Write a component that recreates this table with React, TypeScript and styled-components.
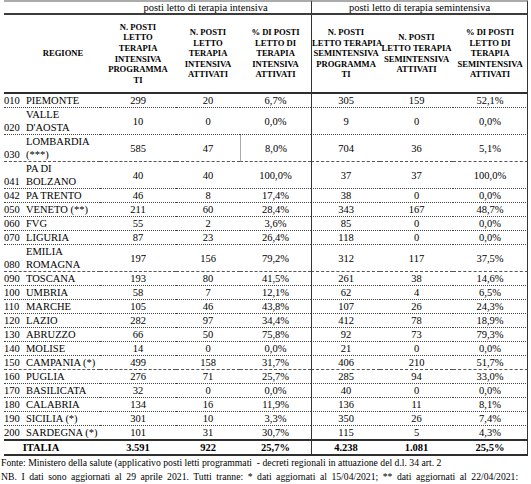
import styled, { createGlobalStyle } from 'styled-components'

type Edge = 'dotted' | 'dashed' | 'thick'

type Row = {
  code: string
  name: string[]
  ti: string[]
  sti: string[]
  edge?: Edge
  mark?: boolean
}

const rows: Row[] = [
  { code: '010', name: ['PIEMONTE'], ti: ['299', '20', '6,7%'], sti: ['305', '159', '52,1%'] },
  { code: '020', name: ['VALLE', "D'AOSTA"], ti: ['10', '0', '0,0%'], sti: ['9', '0', '0,0%'] },
  { code: '030', name: ['LOMBARDIA', '(***)'], ti: ['585', '47', '8,0%'], sti: ['704', '36', '5,1%'], edge: 'dashed', mark: true },
  { code: '041', name: ['PA DI', 'BOLZANO'], ti: ['40', '40', '100,0%'], sti: ['37', '37', '100,0%'] },
  { code: '042', name: ['PA TRENTO'], ti: ['46', '8', '17,4%'], sti: ['38', '0', '0,0%'] },
  { code: '050', name: ['VENETO (**)'], ti: ['211', '60', '28,4%'], sti: ['343', '167', '48,7%'] },
  { code: '060', name: ['FVG'], ti: ['55', '2', '3,6%'], sti: ['85', '0', '0,0%'] },
  { code: '070', name: ['LIGURIA'], ti: ['87', '23', '26,4%'], sti: ['118', '0', '0,0%'] },
  { code: '080', name: ['EMILIA', 'ROMAGNA'], ti: ['197', '156', '79,2%'], sti: ['312', '117', '37,5%'], edge: 'dashed' },
  { code: '090', name: ['TOSCANA'], ti: ['193', '80', '41,5%'], sti: ['261', '38', '14,6%'] },
  { code: '100', name: ['UMBRIA'], ti: ['58', '7', '12,1%'], sti: ['62', '4', '6,5%'] },
  { code: '110', name: ['MARCHE'], ti: ['105', '46', '43,8%'], sti: ['107', '26', '24,3%'] },
  { code: '120', name: ['LAZIO'], ti: ['282', '97', '34,4%'], sti: ['412', '78', '18,9%'] },
  { code: '130', name: ['ABRUZZO'], ti: ['66', '50', '75,8%'], sti: ['92', '73', '79,3%'] },
  { code: '140', name: ['MOLISE'], ti: ['14', '0', '0,0%'], sti: ['21', '0', '0,0%'] },
  { code: '150', name: ['CAMPANIA (*)'], ti: ['499', '158', '31,7%'], sti: ['406', '210', '51,7%'], edge: 'dashed' },
  { code: '160', name: ['PUGLIA'], ti: ['276', '71', '25,7%'], sti: ['285', '94', '33,0%'] },
  { code: '170', name: ['BASILICATA'], ti: ['32', '0', '0,0%'], sti: ['40', '0', '0,0%'] },
  { code: '180', name: ['CALABRIA'], ti: ['134', '16', '11,9%'], sti: ['136', '11', '8,1%'] },
  { code: '190', name: ['SICILIA (*)'], ti: ['301', '10', '3,3%'], sti: ['350', '26', '7,4%'] },
  { code: '200', name: ['SARDEGNA (*)'], ti: ['101', '31', '30,7%'], sti: ['115', '5', '4,3%'], edge: 'thick' },
]

const totals = ['3.591', '922', '25,7%', '4.238', '1.081', '25,5%']

const widths = [96, 76, 64, 71, 69, 73, 75]

const heads = [
  ['N. POSTI', 'LETTO', 'TERAPIA', 'INTENSIVA', 'PROGRAMMA', 'TI'],
  ['N. POSTI', 'LETTO', 'TERAPIA', 'INTENSIVA', 'ATTIVATI'],
  ['% DI POSTI', 'LETTO DI', 'TERAPIA', 'INTENSIVA', 'ATTIVATI'],
  ['N. POSTI', 'LETTO TERAPIA', 'SEMINTENSIVA', 'PROGRAMMA', 'TI'],
  ['N. POSTI', 'LETTO TERAPIA', 'SEMINTENSIVA', 'ATTIVATI'],
  ['% DI POSTI', 'LETTO DI', 'TERAPIA', 'SEMINTENSIVA', 'ATTIVATI'],
]

const lines = (parts: string[]) =>
  parts.map((p, i) => (
    <span key={i}>
      {i > 0 && <br />}
      {p}
    </span>
  ))

export default function App() {
  return (
    <Page>
      <GlobalStyle />
      <Table>
        <colgroup>
          {widths.map((w, i) => (
            <Col key={i} $w={w} />
          ))}
        </colgroup>
        <thead>
          <tr>
            <GroupCell />
            <GroupCell colSpan={3}>posti letto di terapia intensiva</GroupCell>
            <GroupCell colSpan={3} $split $end>
              posti letto di terapia semintensiva
            </GroupCell>
          </tr>
          <tr>
            <HeadCell $region>REGIONE</HeadCell>
            {heads.map((h, i) => (
              <HeadCell key={i} $split={i === 3} $end={i === 5}>
                {lines(h)}
              </HeadCell>
            ))}
          </tr>
        </thead>
        <tbody>
          {rows.map(r => {
            const edge = r.edge ?? 'dotted'
            return (
              <tr key={r.code}>
                <Cell $edge={edge} $left>
                  <Region>
                    <Code>{r.code}</Code>
                    <Name>{lines(r.name)}</Name>
                  </Region>
                </Cell>
                {r.ti.map((v, i) => (
                  <Cell key={'t' + i} $edge={edge} $mark={r.mark && i === 2}>
                    {v}
                  </Cell>
                ))}
                {r.sti.map((v, i) => (
                  <Cell key={'s' + i} $edge={edge} $split={i === 0} $end={i === 2}>
                    {v}
                  </Cell>
                ))}
              </tr>
            )
          })}
          <tr>
            <Cell $edge="thick" $bold $total>
              ITALIA
            </Cell>
            {totals.map((v, i) => (
              <Cell key={i} $edge="thick" $bold $split={i === 3} $end={i === 5}>
                {v}
              </Cell>
            ))}
          </tr>
        </tbody>
      </Table>
      <Footer>
        <Note>
          Fonte: Ministero della salute (applicativo posti letti programmati&nbsp; - decreti regionali in attuazione del d.l. 34 art. 2
        </Note>
        <Note $spread>
          NB. I dati sono aggiornati al 29 aprile 2021. Tutti tranne: * dati aggiornati al 15/04/2021; ** dati aggiornati al 22/04/2021:
        </Note>
      </Footer>
    </Page>
  )
}

const GlobalStyle = createGlobalStyle`
  body {
    margin: 0;
    background: #fff;
  }
`

const Page = styled.div`
  width: 531px;
  height: 484px;
  overflow: hidden;
  font-family: "Liberation Serif", "Times New Roman", serif;
  color: #000;
`

const Table = styled.table`
  margin-left: 4px;
  width: 524px;
  table-layout: fixed;
  border-collapse: separate;
  border-spacing: 0;
`

const Col = styled.col<{ $w: number }>`
  width: ${p => p.$w}px;
`

const GroupCell = styled.th<{ $split?: boolean; $end?: boolean }>`
  padding: 0;
  height: 11px;
  font-size: 10.5px;
  font-weight: normal;
  line-height: 11px;
  text-align: center;
  white-space: nowrap;
  border-top: 2px solid #ababab;
  border-bottom: 2px solid #3c3c3c;
  border-left: ${p => (p.$split ? '1px solid #333' : 'none')};
  border-right: ${p => (p.$end ? '1px solid #333' : 'none')};
`

const HeadCell = styled.th<{ $split?: boolean; $end?: boolean; $region?: boolean }>`
  padding: 0 0 0 ${p => (p.$region ? '22px' : '0')};
  height: 77px;
  font-size: 8.6px;
  font-weight: bold;
  line-height: 10.6px;
  text-align: center;
  vertical-align: middle;
  white-space: nowrap;
  border-bottom: 2px solid #2e2e2e;
  border-left: ${p => (p.$split ? '1px solid #333' : 'none')};
  border-right: ${p => (p.$end ? '1px solid #333' : 'none')};
`

const edgeStyle = (e: Edge) =>
  e === 'thick' ? '2px solid #2e2e2e' : e === 'dashed' ? '1px dashed #555' : '1px dotted #444'

const Cell = styled.td<{
  $edge: Edge
  $split?: boolean
  $end?: boolean
  $left?: boolean
  $bold?: boolean
  $mark?: boolean
  $total?: boolean
}>`
  padding: 0 ${p => (p.$total ? '22px' : '0')} 0 0;
  font-size: 10.5px;
  line-height: 13px;
  font-weight: ${p => (p.$bold ? 'bold' : 'normal')};
  text-align: ${p => (p.$left ? 'left' : 'center')};
  vertical-align: middle;
  white-space: nowrap;
  border-bottom: ${p => edgeStyle(p.$edge)};
  border-left: ${p => (p.$split ? '1px solid #333' : p.$mark ? '1px solid #aaa' : 'none')};
  border-right: ${p => (p.$end ? '1px solid #333' : 'none')};
`

const Region = styled.div`
  display: flex;
  align-items: flex-end;
`

const Code = styled.span`
  flex: none;
  width: 22px;
`

const Name = styled.span`
  display: block;
`

const Footer = styled.div`
  padding: 0 0 0 1px;
`

const Note = styled.p<{ $spread?: boolean }>`
  margin: 0;
  font-size: 9.7px;
  line-height: 14px;
  white-space: nowrap;
  word-spacing: ${p => (p.$spread ? '2.1px' : '0')};
`
